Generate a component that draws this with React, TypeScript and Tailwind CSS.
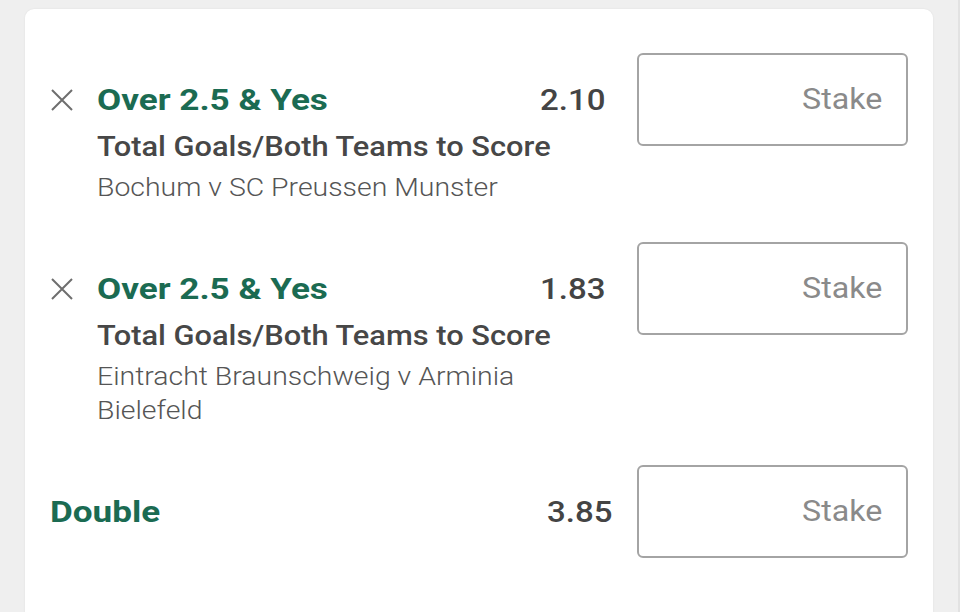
import React from "react";

const font = { fontFamily: "Roboto, 'Noto Sans', sans-serif" };

function XIcon() {
  return (
    <svg width="24" height="24" viewBox="0 0 24 24" className="shrink-0">
      <path d="M2 2 L22 22 M22 2 L2 22" stroke="#6e6e6e" strokeWidth="2" fill="none" />
    </svg>
  );
}

function StakeBox() {
  return (
    <div className="w-[271px] h-[93px] shrink-0 border-2 border-[#a4a4a4] rounded-[6px] flex items-center justify-end pr-[24px]">
      <span className="inline-block origin-right scale-x-[1.11] text-[29px] text-[#8a8a8a] font-normal">Stake</span>
    </div>
  );
}

function Selection({ odds, match, mb }: { odds: string; match: string; mb: string }) {
  return (
    <div className={`flex items-start ${mb}`}>
      <div className="flex-1 flex flex-col">
        <div className="h-[93px] flex items-center">
          <XIcon />
          <span className="ml-[23px] inline-block origin-left scale-x-[1.17] text-[30px] font-bold text-[#1b6b52] leading-[36px]">
            Over 2.5 &amp; Yes
          </span>
          <span className="ml-auto mr-[32px] inline-block origin-right scale-x-[1.1] text-[30px] font-medium text-[#444444] leading-[36px]">
            {odds}
          </span>
        </div>
        <div className="ml-[47px] -mt-[19px] origin-left scale-x-[1.1] text-[28px] font-medium text-[#474747] leading-[40px] whitespace-nowrap">
          Total Goals/Both Teams to Score
        </div>
        <div className="ml-[47px] mt-[3px] w-[440px] origin-left scale-x-[1.072] text-[26.5px] font-light text-[#555555] leading-[34px]">
          {match}
        </div>
      </div>
      <StakeBox />
    </div>
  );
}

export default function App() {
  return (
    <div style={font} className="w-[960px] h-[612px] overflow-hidden bg-[#efefef] pl-[25px] pr-[25px] pt-[9px] border-r-2 border-[#e2e2e2]">
      <div className="bg-white rounded-[9px] h-[640px] pt-[44px] px-[25px] shadow-[0_0_2px_rgba(0,0,0,0.08)]">
        <Selection odds="2.10" match="Bochum v SC Preussen Munster" mb="mb-[38px]" />
        <Selection odds="1.83" match="Eintracht Braunschweig v Arminia Bielefeld" mb="mb-[38px]" />
        <div className="flex items-start">
          <div className="flex-1 h-[93px] flex items-center">
            <span className="inline-block origin-left scale-x-[1.17] text-[30px] font-bold text-[#1b6b52] leading-[36px]">Double</span>
            <span className="ml-auto mr-[25px] inline-block origin-right scale-x-[1.1] text-[30px] font-medium text-[#444444] leading-[36px]">
              3.85
            </span>
          </div>
          <StakeBox />
        </div>
      </div>
    </div>
  );
}
